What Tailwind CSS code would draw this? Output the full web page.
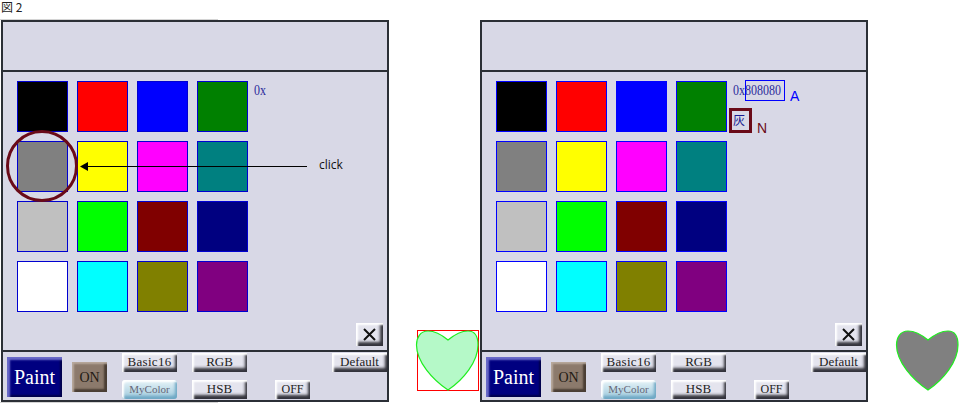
<!DOCTYPE html>
<html lang="ja">
<head>
  <meta charset="UTF-8" />
  <title>図 2</title>
  <script src="https://cdn.jsdelivr.net/npm/@tailwindcss/browser@4"></script>
</head>
<body class="bg-white w-[975px] h-[404px] overflow-hidden font-['Liberation_Sans',sans-serif]">
  <div class="h-[19px] pl-px text-[12px] leading-[14px] text-[#222] font-['Noto_Sans_CJK_JP',sans-serif]">図 2</div>
  <div class="h-px w-[218px] bg-[#d4d4d4]"></div>

  <div class="flex items-start pl-px">
    <!-- left panel -->
    <div class="relative w-[388px] h-[382px] shrink-0 flex flex-col border-2 border-[#2b2f36] bg-[#d8d8e6]">
      <div class="h-[48px] shrink-0 border-b-2 border-[#2b2f36] box-content"></div>
      <div class="relative flex-1">
        <div class="grid grid-cols-[repeat(4,51px)] grid-rows-[repeat(4,51px)] gap-[9px] pl-[14px] pt-[9px]">
          <div class="border border-[#0000d0] bg-[#000000]"></div>
          <div class="border border-[#0000d0] bg-[#ff0000]"></div>
          <div class="border border-[#0000d0] bg-[#0000ff]"></div>
          <div class="border border-[#0000d0] bg-[#008000]"></div>
          <div class="border border-[#0000d0] bg-[#808080]"></div>
          <div class="border border-[#0000d0] bg-[#ffff00]"></div>
          <div class="border border-[#0000d0] bg-[#ff00ff]"></div>
          <div class="border border-[#0000d0] bg-[#008080]"></div>
          <div class="border border-[#0000d0] bg-[#c0c0c0]"></div>
          <div class="border border-[#0000d0] bg-[#00ff00]"></div>
          <div class="border border-[#0000d0] bg-[#800000]"></div>
          <div class="border border-[#0000d0] bg-[#000080]"></div>
          <div class="border border-[#0000d0] bg-[#ffffff]"></div>
          <div class="border border-[#0000d0] bg-[#00ffff]"></div>
          <div class="border border-[#0000d0] bg-[#808000]"></div>
          <div class="border border-[#0000d0] bg-[#800080]"></div>
        </div>
        <span class="absolute left-[251px] top-[11px] scale-y-[1.25] text-[12px] leading-[14px] text-[#2a2a9a] font-['Liberation_Serif',serif]">0x</span>
        <!-- click annotation -->
        <svg class="absolute left-[2px] top-[58px]" width="340" height="76" viewBox="0 0 340 76">
          <circle cx="37" cy="36" r="34.5" fill="none" stroke="#6a0a18" stroke-width="3"/>
          <line x1="80" y1="36.5" x2="302" y2="36.5" stroke="#000" stroke-width="1"/>
          <polygon points="75,36.5 83,32 83,41" fill="#000"/>
        </svg>
        <span class="absolute left-[316px] top-[86px] text-[12px] leading-[14px] text-[#111] font-['Open_Sans',sans-serif]">click</span>
        <button class="absolute right-[4px] bottom-[4px] w-[27px] h-[23px] flex items-center justify-center bg-[#e4e4ee] shadow-[inset_2px_2px_2px_#ffffff,inset_-3px_-4px_3px_#33333c]">
          <svg width="13" height="13" viewBox="0 0 13 13"><path d="M1 1L12 12M12 1L1 12" stroke="#111" stroke-width="2"/></svg>
        </button>
      </div>
      <div class="relative h-[48px] shrink-0 border-t-2 border-[#2b2f36] box-content font-['Liberation_Serif',serif] flex">
        <div class="ml-[4px] mt-[5px] w-[55px] h-[40px] flex items-center justify-center bg-[#000080] text-white text-[20px] shadow-[inset_3px_3px_2px_#6a6ac8,inset_-2px_-2px_2px_#00004a]">Paint</div>
        <div class="ml-[10px] mt-[10px] w-[35px] h-[30px] flex items-center justify-center bg-[#8c7a6c] text-[#221a14] text-[14px] shadow-[inset_2px_2px_2px_#b8a99c,inset_-3px_-3px_2px_#4a3e34]">ON</div>
        <div class="ml-[15px] mt-px flex flex-col gap-2">
          <div class="w-[55px] h-[19px] pb-px flex items-center justify-center bg-[#e4e4ee] text-[13px] tracking-[0.3px] text-[#222] shadow-[inset_2px_2px_2px_#ffffff,inset_-2px_-4px_3px_#33333c]">Basic16</div>
          <div class="w-[55px] h-[19px] pb-px flex items-center justify-center rounded-[3px] bg-linear-to-b from-[#e8f4f8] to-[#9cc8dc] text-[11px] text-[#667] shadow-[inset_2px_2px_2px_#ffffff,inset_-2px_-3px_3px_#6fa8c4]">MyColor</div>
        </div>
        <div class="ml-[15px] mt-px flex flex-col gap-2">
          <div class="w-[55px] h-[19px] pb-px flex items-center justify-center bg-[#e4e4ee] text-[13px] text-[#222] shadow-[inset_2px_2px_2px_#ffffff,inset_-2px_-4px_3px_#33333c]">RGB</div>
          <div class="w-[55px] h-[19px] pb-px flex items-center justify-center bg-[#e4e4ee] text-[13px] text-[#222] shadow-[inset_2px_2px_2px_#ffffff,inset_-2px_-4px_3px_#33333c]">HSB</div>
        </div>
        <div class="ml-[28px] mt-[28px] w-[35px] h-[19px] pb-px flex items-center justify-center bg-[#e4e4ee] text-[12px] text-[#222] shadow-[inset_2px_2px_2px_#ffffff,inset_-2px_-4px_3px_#33333c]">OFF</div>
        <div class="ml-[22px] mt-px w-[55px] h-[19px] pb-px flex items-center justify-center bg-[#e4e4ee] text-[13px] text-[#222] shadow-[inset_2px_2px_2px_#ffffff,inset_-2px_-4px_3px_#33333c]">Default</div>
      </div>
    </div>

    <!-- light heart -->
    <div class="ml-[28px] mt-[310px] w-[62px] h-[61px] shrink-0 border border-[#ff0000]">
      <svg width="60" height="59" viewBox="0 0 60 59" class="overflow-visible">
        <path d="M30 9C24 4 17 0 10 0C2 0 -1.5 7 -1.5 14C-1.5 31 15 49 30 59C45 49 60 31 60 14C60 7 58 0 50 0C43 0 36 4 30 9Z" fill="#b5f9c8" stroke="#1fee1f" stroke-width="1.2"/>
      </svg>
    </div>

    <!-- right panel -->
    <div class="relative w-[388px] h-[382px] ml-px shrink-0 flex flex-col border-2 border-[#2b2f36] bg-[#d8d8e6]">
      <div class="h-[48px] shrink-0 border-b-2 border-[#2b2f36] box-content"></div>
      <div class="relative flex-1">
        <div class="grid grid-cols-[repeat(4,51px)] grid-rows-[repeat(4,51px)] gap-[9px] pl-[14px] pt-[9px]">
          <div class="border border-[#0000ff] bg-[#000000]"></div>
          <div class="border border-[#0000ff] bg-[#ff0000]"></div>
          <div class="border border-[#0000ff] bg-[#0000ff]"></div>
          <div class="border border-[#0000ff] bg-[#008000]"></div>
          <div class="border border-[#0000ff] bg-[#808080]"></div>
          <div class="border border-[#0000ff] bg-[#ffff00]"></div>
          <div class="border border-[#0000ff] bg-[#ff00ff]"></div>
          <div class="border border-[#0000ff] bg-[#008080]"></div>
          <div class="border border-[#0000ff] bg-[#c0c0c0]"></div>
          <div class="border border-[#0000ff] bg-[#00ff00]"></div>
          <div class="border border-[#0000ff] bg-[#800000]"></div>
          <div class="border border-[#0000ff] bg-[#000080]"></div>
          <div class="border border-[#0000ff] bg-[#ffffff]"></div>
          <div class="border border-[#0000ff] bg-[#00ffff]"></div>
          <div class="border border-[#0000ff] bg-[#808000]"></div>
          <div class="border border-[#0000ff] bg-[#800080]"></div>
        </div>
        <span class="absolute left-[251px] top-[11px] scale-y-[1.25] text-[12px] leading-[14px] text-[#2a2a9a] font-['Liberation_Serif',serif]">0x808080</span>
        <div class="absolute left-[263px] top-[8px] w-[40px] h-[21px] border border-[#0000ff]"></div>
        <span class="absolute left-[308px] top-[16px] text-[14px] leading-[16px] text-[#0000ff]">A</span>
        <div class="absolute left-[247px] top-[36px] w-[23px] h-[25px] pl-px pb-px border-[3px] border-[#6a0a18] flex items-center text-[12px] leading-none text-[#1a1a90] font-['Noto_Sans_CJK_JP',sans-serif]">灰</div>
        <span class="absolute left-[275px] top-[48px] text-[14px] leading-[16px] text-[#6a0a18]">N</span>
        <button class="absolute right-[4px] bottom-[4px] w-[27px] h-[23px] flex items-center justify-center bg-[#e4e4ee] shadow-[inset_2px_2px_2px_#ffffff,inset_-3px_-4px_3px_#33333c]">
          <svg width="13" height="13" viewBox="0 0 13 13"><path d="M1 1L12 12M12 1L1 12" stroke="#111" stroke-width="2"/></svg>
        </button>
      </div>
      <div class="relative h-[48px] shrink-0 border-t-2 border-[#2b2f36] box-content font-['Liberation_Serif',serif] flex">
        <div class="ml-[4px] mt-[5px] w-[55px] h-[40px] flex items-center justify-center bg-[#000080] text-white text-[20px] shadow-[inset_3px_3px_2px_#6a6ac8,inset_-2px_-2px_2px_#00004a]">Paint</div>
        <div class="ml-[10px] mt-[10px] w-[35px] h-[30px] flex items-center justify-center bg-[#8c7a6c] text-[#221a14] text-[14px] shadow-[inset_2px_2px_2px_#b8a99c,inset_-3px_-3px_2px_#4a3e34]">ON</div>
        <div class="ml-[15px] mt-px flex flex-col gap-2">
          <div class="w-[55px] h-[19px] pb-px flex items-center justify-center bg-[#e4e4ee] text-[13px] tracking-[0.3px] text-[#222] shadow-[inset_2px_2px_2px_#ffffff,inset_-2px_-4px_3px_#33333c]">Basic16</div>
          <div class="w-[55px] h-[19px] pb-px flex items-center justify-center rounded-[3px] bg-linear-to-b from-[#e8f4f8] to-[#9cc8dc] text-[11px] text-[#667] shadow-[inset_2px_2px_2px_#ffffff,inset_-2px_-3px_3px_#6fa8c4]">MyColor</div>
        </div>
        <div class="ml-[15px] mt-px flex flex-col gap-2">
          <div class="w-[55px] h-[19px] pb-px flex items-center justify-center bg-[#e4e4ee] text-[13px] text-[#222] shadow-[inset_2px_2px_2px_#ffffff,inset_-2px_-4px_3px_#33333c]">RGB</div>
          <div class="w-[55px] h-[19px] pb-px flex items-center justify-center bg-[#e4e4ee] text-[13px] text-[#222] shadow-[inset_2px_2px_2px_#ffffff,inset_-2px_-4px_3px_#33333c]">HSB</div>
        </div>
        <div class="ml-[28px] mt-[28px] w-[35px] h-[19px] pb-px flex items-center justify-center bg-[#e4e4ee] text-[12px] text-[#222] shadow-[inset_2px_2px_2px_#ffffff,inset_-2px_-4px_3px_#33333c]">OFF</div>
        <div class="ml-[22px] mt-px w-[55px] h-[19px] pb-px flex items-center justify-center bg-[#e4e4ee] text-[13px] text-[#222] shadow-[inset_2px_2px_2px_#ffffff,inset_-2px_-4px_3px_#33333c]">Default</div>
      </div>
    </div>

    <!-- grey heart -->
    <div class="ml-[29px] mt-[310px] w-[62px] h-[61px] shrink-0 p-px">
      <svg width="60" height="59" viewBox="0 0 60 59" class="overflow-visible">
        <path d="M30 9C24 4 17 0 10 0C2 0 -1.5 7 -1.5 14C-1.5 31 15 49 30 59C45 49 60 31 60 14C60 7 58 0 50 0C43 0 36 4 30 9Z" fill="#808080" stroke="#1fee1f" stroke-width="1.2"/>
      </svg>
    </div>
  </div>
  <div class="h-px w-[218px] bg-[#d4d4d4]"></div>
</body>
</html>
